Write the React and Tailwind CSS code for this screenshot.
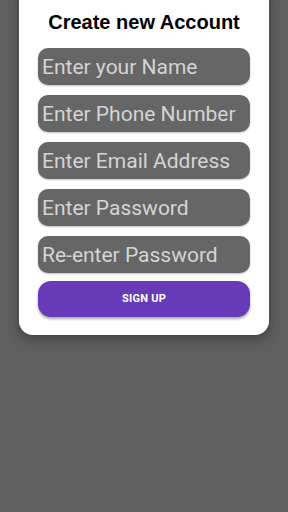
export default function App() {
  const fields = [
    "Enter your Name",
    "Enter Phone Number",
    "Enter Email Address",
    "Enter Password",
    "Re-enter Password",
  ];

  return (
    <div className="w-[288px] h-[512px] bg-[#5f5f5f] overflow-hidden" style={{ fontFamily: "Roboto, sans-serif" }}>
      <div className="mx-[19px] -mt-4 pt-[26px] pb-[18px] px-[19px] bg-white rounded-[14px] shadow-[0_4px_12px_rgba(0,0,0,0.35)]">
        <h1 className="text-center text-[20px] font-bold text-black leading-6" style={{ fontFamily: "'Liberation Sans', Arial, sans-serif" }}>
          Create new Account
        </h1>
        <div className="mt-[14px] flex flex-col gap-[10px]">
          {fields.map((f) => (
            <input
              key={f}
              placeholder={f}
              className="w-full h-[37px] rounded-[10px] bg-[#666666] px-[4px] text-[21px] text-white placeholder:text-[#d4d4d4] outline-none shadow-[0_1px_2px_rgba(0,0,0,0.25)]"
            />
          ))}
        </div>
        <button className="mt-[8px] w-full h-[36px] rounded-[13px] bg-[#673ab7] text-white text-[11px] font-bold tracking-wide shadow-[0_2px_3px_rgba(0,0,0,0.35)]">
          SIGN UP
        </button>
      </div>
    </div>
  );
}
